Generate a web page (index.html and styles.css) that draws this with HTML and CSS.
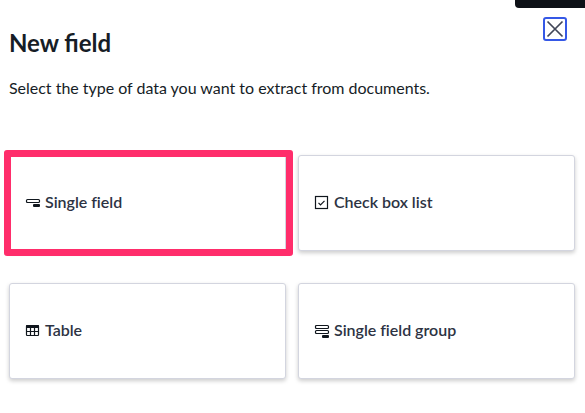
FILE: index.html
```html
<!DOCTYPE html>
<html lang="en">
<head>
<meta charset="utf-8">
<title>New field</title>
<link rel="stylesheet" href="styles.css">
</head>
<body>
<div class="tooltip"></div>
<main class="panel">
  <header class="header">
    <h1 class="title">New field</h1>
    <button class="close" aria-label="Close">
      <svg width="20" height="20" viewBox="0 0 20 20"><path d="M2.500 2.500l15 15M17.500 2.500l-15 15"/></svg>
    </button>
  </header>
  <p class="intro">Select the type of data you want to extract from documents.</p>
  <div class="grid">
    <div class="card selected">
      <svg class="icon" width="16" height="16" viewBox="0 0 16 16"><rect class="line" x="1.500" y="4.500" width="13" height="3" rx="1"/><rect x="8" y="9" width="7" height="3" rx="1"/></svg>
      <span class="label">Single field</span>
    </div>
    <div class="card">
      <svg class="icon" width="16" height="16" viewBox="0 0 16 16"><rect class="line" x="1.500" y="1.500" width="12" height="12"/><path class="line" d="M4.500 7.800l2 2 4-4"/></svg>
      <span class="label">Check box list</span>
    </div>
    <div class="card">
      <svg class="icon" width="16" height="16" viewBox="0 0 16 16"><rect class="line" x="1.500" y="2.500" width="12" height="10" rx=".7"/><rect x="1" y="2" width="13" height="3" rx="1"/><path class="line" d="M5.500 4v9M9.500 4v9M1 8.500h13"/></svg>
      <span class="label">Table</span>
    </div>
    <div class="card">
      <svg class="icon" width="16" height="16" viewBox="0 0 16 16"><rect class="line" x="1.500" y="2.500" width="13" height="3" rx="1"/><rect class="line" x="1.500" y="7.500" width="13" height="3" rx="1"/><rect x="8" y="12" width="7" height="3" rx="1"/></svg>
      <span class="label">Single field group</span>
    </div>
  </div>
</main>
</body>
</html>
```
FILE: styles.css
```css
* { box-sizing: border-box; }
body {
  margin: 0;
  background: #fff;
  color: #161d26;
  font-family: Lato, "Liberation Sans", sans-serif;
}
.tooltip {
  position: absolute;
  top: 0;
  right: 0;
  width: 70px;
  height: 8px;
  background: #0d1117;
  border-bottom-left-radius: 4px;
}
.panel { padding: 17px 10px 30px 9px; }
.header {
  display: flex;
  justify-content: space-between;
  align-items: flex-start;
  height: 59px;
  padding-right: 8px;
}
.title {
  margin: 10px 0 0;
  font-size: 24px;
  line-height: 32px;
  font-weight: 700;
}
.close {
  display: flex;
  align-items: center;
  justify-content: center;
  width: 24px;
  height: 24px;
  padding: 0;
  border: 2px solid #3558e6;
  border-radius: 3px;
  background: #fff;
}
.close svg { flex: none; fill: none; stroke: #414658; stroke-width: 1.7; }
.intro {
  margin: 0;
  font-size: 16px;
  line-height: 24px;
  letter-spacing: -.015px;
}
.grid {
  display: grid;
  grid-template-columns: 277px 277px;
  grid-auto-rows: 96px;
  gap: 32px 12px;
  margin-top: 55px;
}
.card {
  position: relative;
  display: flex;
  align-items: center;
  gap: 4px;
  padding: 0 15px;
  border: 1px solid #d3d5df;
  border-radius: 3px;
  background: #fff;
  box-shadow: 0 2px 4px rgba(0, 0, 0, .2);
}
.selected::after {
  content: "";
  position: absolute;
  inset: -6px -8px -6px -6.500px;
  border: 7px solid #ff2d6b;
  border-radius: 3px;
}
.icon { flex: none; fill: #10161d; }
.line { fill: none; stroke: #10161d; stroke-width: 1.2; }
.label {
  margin-bottom: 2px;
  color: #2d3343;
  font-size: 16px;
  line-height: 24px;
  letter-spacing: -.02px;
  font-weight: 600;
}
```
